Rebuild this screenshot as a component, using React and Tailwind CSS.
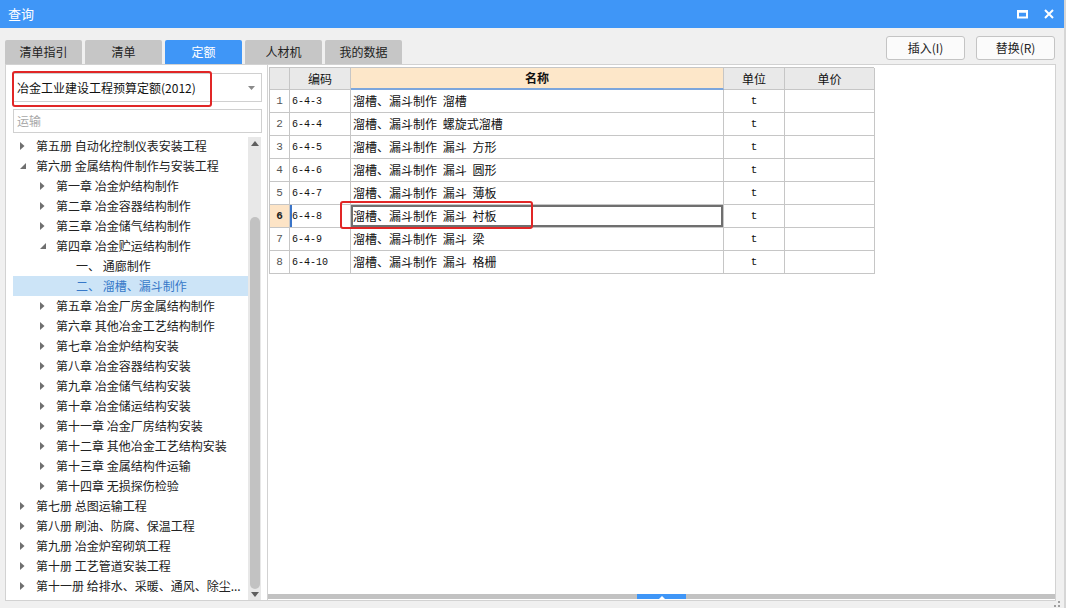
import React from 'react'

const tabs = ['清单指引', '清单', '定额', '人材机', '我的数据']

const tree = [
  { l: 1, t: '第五册 自动化控制仪表安装工程', s: 'c' },
  { l: 1, t: '第六册 金属结构件制作与安装工程', s: 'o' },
  { l: 2, t: '第一章 冶金炉结构制作', s: 'c' },
  { l: 2, t: '第二章 冶金容器结构制作', s: 'c' },
  { l: 2, t: '第三章 冶金储气结构制作', s: 'c' },
  { l: 2, t: '第四章 冶金贮运结构制作', s: 'o' },
  { l: 3, t: '一、 通廊制作' },
  { l: 3, t: '二、 溜槽、漏斗制作', sel: true },
  { l: 2, t: '第五章 冶金厂房金属结构制作', s: 'c' },
  { l: 2, t: '第六章 其他冶金工艺结构制作', s: 'c' },
  { l: 2, t: '第七章 冶金炉结构安装', s: 'c' },
  { l: 2, t: '第八章 冶金容器结构安装', s: 'c' },
  { l: 2, t: '第九章 冶金储气结构安装', s: 'c' },
  { l: 2, t: '第十章 冶金储运结构安装', s: 'c' },
  { l: 2, t: '第十一章 冶金厂房结构安装', s: 'c' },
  { l: 2, t: '第十二章 其他冶金工艺结构安装', s: 'c' },
  { l: 2, t: '第十三章 金属结构件运输', s: 'c' },
  { l: 2, t: '第十四章 无损探伤检验', s: 'c' },
  { l: 1, t: '第七册 总图运输工程', s: 'c' },
  { l: 1, t: '第八册 刷油、防腐、保温工程', s: 'c' },
  { l: 1, t: '第九册 冶金炉窑砌筑工程', s: 'c' },
  { l: 1, t: '第十册 工艺管道安装工程', s: 'c' },
  { l: 1, t: '第十一册 给排水、采暖、通风、除尘...', s: 'c' },
]

const rows = [
  ['6-4-3', '溜槽、漏斗制作 溜槽'],
  ['6-4-4', '溜槽、漏斗制作 螺旋式溜槽'],
  ['6-4-5', '溜槽、漏斗制作 漏斗 方形'],
  ['6-4-6', '溜槽、漏斗制作 漏斗 圆形'],
  ['6-4-7', '溜槽、漏斗制作 漏斗 薄板'],
  ['6-4-8', '溜槽、漏斗制作 漏斗 衬板'],
  ['6-4-9', '溜槽、漏斗制作 漏斗 梁'],
  ['6-4-10', '溜槽、漏斗制作 漏斗 格栅'],
]

const Arrow = ({ open }) =>
  open ? (
    <svg width="6" height="6" viewBox="0 0 6 6">
      <path d="M6 0 L6 6 L0 6 Z" fill="#6f6f6f" />
    </svg>
  ) : (
    <svg width="5" height="8" viewBox="0 0 5 8">
      <path d="M0 0 L4.5 4 L0 8 Z" fill="#6f6f6f" />
    </svg>
  )

const cellB = 'border-r border-b border-[#c6c6c6]'
const mono = { fontFamily: '"Liberation Mono", monospace' }

export default function App() {
  return (
    <div
      className="w-[1066px] h-[608px] bg-[#f0f0f0] flex flex-col overflow-hidden relative border-r-2 border-[#d6d6d6]"
      style={{ fontFamily: '"Noto Sans CJK SC", "Liberation Sans", sans-serif' }}
    >
      {/* title bar */}
      <div className="h-[28px] bg-[#3f96f7] flex items-center justify-between pl-[8px] pr-[10px] text-white text-[13px]">
        <span>查询</span>
        <div className="flex items-center gap-[16px]">
          <svg width="11" height="9" viewBox="0 0 11 9">
            <rect x="1" y="1.5" width="9" height="6" fill="none" stroke="#fff" strokeWidth="2" />
            <rect x="0" y="0" width="11" height="2.5" fill="#fff" />
          </svg>
          <svg width="10" height="10" viewBox="0 0 10 10">
            <path d="M1 1 L9 9 M9 1 L1 9" stroke="#fff" strokeWidth="2" />
          </svg>
        </div>
      </div>

      {/* tab row */}
      <div className="h-[36px] flex justify-between pl-[5px] pr-[9px]">
        <div className="flex items-end gap-[3px]">
          {tabs.map((t) => (
            <div
              key={t}
              className={`w-[77px] h-[24px] rounded-t-[2px] flex items-center justify-center text-[12px] ${
                t === '定额' ? 'bg-[#3f96f7] text-white' : 'bg-[#c6c6c6] text-[#222]'
              }`}
            >
              {t}
            </div>
          ))}
        </div>
        <div className="flex gap-[11px] pt-[8px]">
          {['插入(I)', '替换(R)'].map((b) => (
            <div
              key={b}
              className="w-[79px] h-[24px] bg-[#fbfbfb] border border-[#c4c4c4] rounded-[3px] flex items-center justify-center text-[12px] text-[#222]"
            >
              {b}
            </div>
          ))}
        </div>
      </div>

      {/* main */}
      <div className="h-[537px] flex pl-[5px]">
        {/* left panel */}
        <div className="w-[263px] bg-white border border-[#d2d2d2] relative flex flex-col pl-[7px] pr-[5px] pt-[8px]">
          <div className="h-[29px] border border-[#d0d0d0] flex items-center justify-between pl-[3px] pr-[6px] text-[12px] text-[#111]">
            <span>冶金工业建设工程预算定额(2012)</span>
            <svg width="7" height="4" viewBox="0 0 7 4">
              <path d="M0 0 L7 0 L3.5 4 Z" fill="#8a8a8a" />
            </svg>
          </div>
          <div className="h-[24px] mt-[7px] border border-[#d0d0d0] flex items-center pl-[3px] text-[12px] text-[#a8a8a8]">
            运输
          </div>
          <div className="flex-1 flex mt-[3px] min-h-0">
            <div className="w-[235px] flex flex-col">
              {tree.map((n, i) => (
                <div
                  key={i}
                  className={`h-[20px] flex items-center text-[12px] whitespace-nowrap ${
                    n.sel ? 'bg-[#cce4f7] text-[#3678c8]' : 'text-[#222]'
                  }`}
                  style={{ paddingLeft: 7 + (n.l - 1) * 20 }}
                >
                  <span className="w-[16px] shrink-0 flex items-center">{n.s && <Arrow open={n.s === 'o'} />}</span>
                  <span>{n.t}</span>
                </div>
              ))}
            </div>
            <div className="w-[13px] bg-[#e8e8e8] mt-[1px] flex flex-col items-center">
              <svg className="mt-[4px]" width="8" height="5" viewBox="0 0 8 5">
                <path d="M0 5 L4 0 L8 5 Z" fill="#5f5f5f" />
              </svg>
              <div className="w-[10px] flex-1 mt-[71px] mb-[3px] bg-[#c2c2c2] rounded-full" />
              <svg className="mb-[3px]" width="8" height="5" viewBox="0 0 8 5">
                <path d="M0 0 L8 0 L4 5 Z" fill="#5f5f5f" />
              </svg>
            </div>
          </div>
          <div className="absolute left-[6px] top-[6px] w-[200px] h-[36px] border-2 border-[#e12626] rounded-[3px]" />
        </div>

        {/* right panel */}
        <div className="w-[788px] bg-white border border-[#d2d2d2] border-l-0 relative flex flex-col">
          <div className="pl-[1px] pt-[2px]">
            <div className="grid grid-cols-[20px_61px_373px_61px_90px] w-[605px] border-l border-t border-[#c6c6c6] text-[12px] text-[#111]">
              <div className={`${cellB} h-[22px] bg-[#e9e9e9]`} />
              <div className={`${cellB} h-[22px] bg-[#e9e9e9] flex items-center justify-center`}>编码</div>
              <div className="border-r border-[#c6c6c6] border-b-2 border-b-[#7ca6dc] h-[22px] bg-[#fde7c9] flex items-center justify-center font-bold">
                名称
              </div>
              <div className={`${cellB} h-[22px] bg-[#e9e9e9] flex items-center justify-center`}>单位</div>
              <div className={`${cellB} h-[22px] bg-[#e9e9e9] flex items-center justify-center`}>单价</div>
              {rows.map(([code, name], i) => {
                const sel = i === 5
                return (
                  <React.Fragment key={code}>
                    <div
                      className={`${cellB} h-[23px] flex items-center justify-center text-[11px] ${
                        sel ? 'bg-[#fde4c6] font-bold text-[#222]' : 'text-[#555]'
                      }`}
                      style={mono}
                    >
                      {i + 1}
                    </div>
                    <div
                      className={`${cellB} h-[23px] flex items-center pl-[2px] text-[10px] ${
                        sel ? 'shadow-[inset_2px_0_0_#3a74c8]' : ''
                      }`}
                      style={mono}
                    >
                      {code}
                    </div>
                    <div
                      className={`${cellB} h-[23px] flex items-center pl-[2px] [word-spacing:3px] ${
                        sel ? 'shadow-[inset_0_0_0_2px_#6f6f6f]' : ''
                      }`}
                    >
                      {name}
                    </div>
                    <div className={`${cellB} h-[23px] flex items-center justify-center text-[11px]`} style={mono}>
                      t
                    </div>
                    <div className={`${cellB} h-[23px]`} />
                  </React.Fragment>
                )
              })}
            </div>
          </div>
          <div className="flex-1" />
          <div className="h-[5px] bg-[#c2c2c2] mb-[1px] flex">
            <div className="ml-[369px] w-[49px] h-[5px] bg-[#3f96f7] flex items-end justify-center">
              <svg width="6" height="3" viewBox="0 0 6 3">
                <path d="M0 3 L3 0 L6 3 Z" fill="#fff" />
              </svg>
            </div>
          </div>
          <div className="absolute left-[72px] top-[136px] w-[193px] h-[28px] border-2 border-[#e12626] rounded-[3px]" />
        </div>
      </div>

      {/* resize grip */}
      <svg className="absolute right-[4px] bottom-[1px]" width="6" height="6" viewBox="0 0 6 6">
        <rect x="4" y="0" width="2" height="2" fill="#a0a0a0" />
        <rect x="0" y="4" width="2" height="2" fill="#a0a0a0" />
        <rect x="4" y="4" width="2" height="2" fill="#a0a0a0" />
      </svg>
    </div>
  )
}
